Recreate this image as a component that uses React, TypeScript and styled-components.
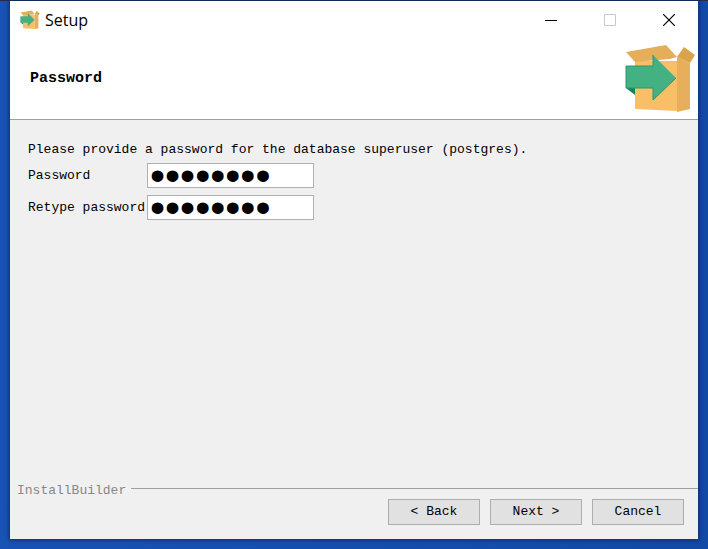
import React, { useState } from "react";
import styled, { createGlobalStyle } from "styled-components";

const GlobalStyle = createGlobalStyle`
  * { box-sizing: border-box; }
  body {
    margin: 0;
    background: #134ea9;
    color: #000;
    font-family: "Liberation Mono", monospace;
    font-size: 13px;
    line-height: 16px;
  }
`;

const Desktop = styled.div`
  display: flex;
  min-height: 100vh;
  padding: 1px 10px 10px;
  background: linear-gradient(90deg, #1853b5, #124aa6);
  box-shadow: inset 0 1px #252b43;
`;

const Window = styled.main`
  display: flex;
  flex: 1;
  flex-direction: column;
  background: #f0f0f0;
  box-shadow: 0 0 4px 1px #0b2d6b;
`;

const TitleBar = styled.header`
  display: flex;
  align-items: center;
  height: 38px;
  padding-left: 10px;
  background: #fff;
`;

const Title = styled.h1`
  flex: 1;
  margin: 0 0 0 5px;
  font: 400 16px/20px "Open Sans", sans-serif;
`;

const CaptionButton = styled.button`
  display: flex;
  align-items: center;
  justify-content: center;
  width: 59px;
  height: 38px;
  padding: 0;
  border: 0;
  background: none;
  color: #000;

  &:disabled { color: #c3cbc6; }
`;

const Banner = styled.section`
  display: flex;
  align-items: center;
  justify-content: space-between;
  height: 81px;
  padding: 0 2px 0 20px;
  border-bottom: 1px solid #a0a0a0;
  background: #fff;
`;

const Heading = styled.h2`
  margin: 0;
  font-size: 15px;
  font-weight: 700;
  line-height: 16px;
`;

const Form = styled.form`
  display: flex;
  flex: 1;
  flex-direction: column;
`;

const Content = styled.div`
  flex: 1;
  padding: 22px 18px;
`;

const Prompt = styled.p`
  margin: 0 0 5px;
`;

const Fields = styled.div`
  display: grid;
  grid-template-columns: 119px 167px;
  row-gap: 7px;
  align-items: center;
`;

const PasswordInput = styled.input`
  width: 100%;
  height: 25px;
  padding: 0 2px;
  border: 1px solid #b0b0b0;
  border-radius: 0;
  outline: 0;
  background: #fff;
  color: #000;
  font: 400 43px/23px "Liberation Sans", sans-serif;
`;

const Brand = styled.div`
  display: flex;
  align-items: center;
  gap: 5px;
  padding-left: 7px;
  color: #878787;
`;

const Rule = styled.hr`
  flex: 1;
  margin: 0 0 6px;
  border: 0;
  border-top: 1px solid #a0a0a0;
`;

const Actions = styled.footer`
  display: flex;
  justify-content: flex-end;
  gap: 10px;
  padding: 0 14px 14px;
`;

const ActionButton = styled.button`
  width: 92px;
  height: 26px;
  padding: 0;
  border: 1px solid #adadad;
  background: #e1e1e1;
  color: #000;
  font: inherit;
`;

function BoxIcon({ size }: { size: number }) {
  return (
    <svg width={size} height={size} viewBox="0 0 72 72" aria-hidden="true">
      <path d="M11 18H53V68L11 66Z" fill="#f8bf66" />
      <path d="M53 14L66 20V66L53 69Z" fill="#e7af5c" />
      <path d="M2 9L42 2L53 14L46 16L11 19Z" fill="#e5ae5b" />
      <path d="M53 14L60 4L71 12L66 20Z" fill="#d9a44b" />
      <path d="M2 45H11V52Z" fill="#178259" />
      <path d="M2 23H29V12L52 35L29 57V45H2Z" fill="#44b183" />
      <path d="M2 45V23H29V12M29 57V45H2M29 57L52 35" fill="none" stroke="#26996c" />
    </svg>
  );
}

export default function App() {
  const [password, setPassword] = useState("postgres");
  const [retyped, setRetyped] = useState("postgres");

  return (
    <>
      <GlobalStyle />
      <Desktop>
        <Window>
          <TitleBar>
            <BoxIcon size={20} />
            <Title>Setup</Title>
            <CaptionButton aria-label="Minimize">
              <svg width="12" height="12" aria-hidden="true"><path d="M0 6.5H12" stroke="currentColor" /></svg>
            </CaptionButton>
            <CaptionButton aria-label="Maximize" disabled>
              <svg width="12" height="12" aria-hidden="true"><path d="M.5 .5H11.5V11.5H.5Z" fill="none" stroke="currentColor" /></svg>
            </CaptionButton>
            <CaptionButton aria-label="Close">
              <svg width="12" height="12" aria-hidden="true"><path d="M0 0L12 12M12 0L0 12" stroke="currentColor" strokeWidth="1.2" /></svg>
            </CaptionButton>
          </TitleBar>
          <Banner>
            <Heading>Password</Heading>
            <BoxIcon size={72} />
          </Banner>
          <Form onSubmit={(event) => event.preventDefault()}>
            <Content>
              <Prompt>Please provide a password for the database superuser (postgres).</Prompt>
              <Fields>
                <label htmlFor="password">Password</label>
                <PasswordInput id="password" type="password" value={password} onChange={(event) => setPassword(event.target.value)} />
                <label htmlFor="retype">Retype password</label>
                <PasswordInput id="retype" type="password" value={retyped} onChange={(event) => setRetyped(event.target.value)} />
              </Fields>
            </Content>
            <Brand>
              <span>InstallBuilder</span>
              <Rule />
            </Brand>
            <Actions>
              <ActionButton type="button">&lt; Back</ActionButton>
              <ActionButton type="submit">Next &gt;</ActionButton>
              <ActionButton type="button">Cancel</ActionButton>
            </Actions>
          </Form>
        </Window>
      </Desktop>
    </>
  );
}
